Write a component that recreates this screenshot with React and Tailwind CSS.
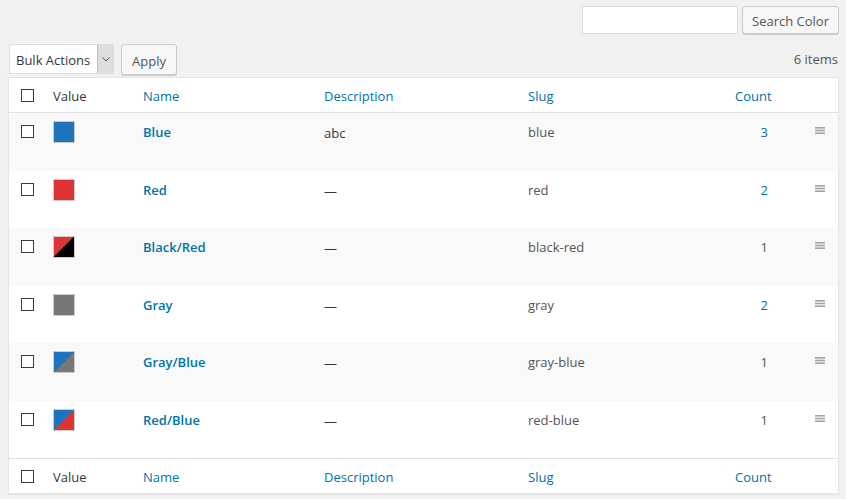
import React from "react";

const rows = [
  { name: "Blue", desc: "abc", slug: "blue", count: "3", link: true, sw: "bg-[#1e73be]" },
  { name: "Red", desc: "—", slug: "red", count: "2", link: true, sw: "bg-[#dd3333]" },
  { name: "Black/Red", desc: "—", slug: "black-red", count: "1", link: false, sw: "bg-[linear-gradient(to_bottom_right,#dd3333_50%,#000000_50%)]" },
  { name: "Gray", desc: "—", slug: "gray", count: "2", link: true, sw: "bg-[#777777]" },
  { name: "Gray/Blue", desc: "—", slug: "gray-blue", count: "1", link: false, sw: "bg-[linear-gradient(to_bottom_right,#1e73be_50%,#777777_50%)]" },
  { name: "Red/Blue", desc: "—", slug: "red-blue", count: "1", link: false, sw: "bg-[linear-gradient(to_bottom_right,#1e73be_50%,#dd3333_50%)]" },
];

const grid = "grid grid-cols-[34px_90px_181px_204px_207px_51px_62px]";

function Checkbox({ className = "" }) {
  return <div className={"w-[13px] h-[13px] border border-[#3c3c3c] bg-white " + className} />;
}

function Handle() {
  return (
    <svg width="10" height="7" viewBox="0 0 10 7" className="block">
      <rect x="0" y="0" width="10" height="1.6" fill="#a0a5aa" />
      <rect x="0" y="2.7" width="10" height="1.6" fill="#a0a5aa" />
      <rect x="0" y="5.4" width="10" height="1.6" fill="#a0a5aa" />
    </svg>
  );
}

function HeadRow({ border }) {
  return (
    <div className={grid + " h-[35px] items-center " + border}>
      <div className="pl-[12px] pt-[1px]"><Checkbox /></div>
      <div className="pl-[10px] pt-[4px] text-[#32373c]">Value</div>
      <div className="pl-[10px] pt-[4px] text-[#0073aa]">Name</div>
      <div className="pl-[10px] pt-[4px] text-[#0073aa]">Description</div>
      <div className="pl-[10px] pt-[4px] text-[#0073aa]">Slug</div>
      <div className="pl-[10px] pt-[4px] text-[#0073aa]">Count</div>
      <div />
    </div>
  );
}

export default function App() {
  return (
    <div className="w-[846px] h-[499px] bg-[#f1f1f1] overflow-hidden font-['Open_Sans',sans-serif] text-[13px] leading-[1.5] text-[#32373c]">
      <div className="flex justify-end pt-[6px] pr-[7px] gap-[4px]">
        <div className="w-[156px] h-[28px] bg-white border border-[#dddddd]" />
        <div className="h-[28px] px-[9px] pt-[3px] flex items-center bg-[#f7f7f7] border border-[#cccccc] rounded-[3px] shadow-[0_1px_0_#cccccc] text-[#555555]">
          Search Color
        </div>
      </div>
      <div className="flex items-center h-[30px] mt-[10px] pl-[9px] pr-[8px]">
        <div className="flex h-[30px] w-[105px] bg-white border border-[#dddddd]">
          <div className="flex-1 flex items-center pl-[6px] pt-[3px] text-[#32373c]">Bulk Actions</div>
          <div className="w-[16px] bg-[#dddddd] border-l border-[#bbbbbb] flex items-center justify-center">
            <svg width="8" height="5" viewBox="0 0 8 5"><path d="M0.5 0.5 L4 4 L7.5 0.5" fill="none" stroke="#555" strokeWidth="1" /></svg>
          </div>
        </div>
        <div className="ml-[7px] h-[31px] mt-[1px] px-[10px] flex items-center pt-[4px] bg-[#f7f7f7] border border-[#cccccc] rounded-[3px] shadow-[0_1px_0_#cccccc] text-[#555555]">
          Apply
        </div>
        <div className="flex-1" />
        <div className="text-[#555555] pt-[1px]">6 items</div>
      </div>
      <div className="mt-[3px] ml-[8px] w-[831px] bg-white border border-[#e5e5e5] shadow-[0_1px_1px_rgba(0,0,0,0.04)]">
        <HeadRow border="border-b border-[#e1e1e1]" />
        {rows.map((r, i) => (
          <div key={r.slug} className={grid + " h-[57.5px] items-start " + (i % 2 === 0 ? "bg-[#f9f9f9]" : "bg-white")}>
            <div className="pl-[12px] pt-[12px]"><Checkbox /></div>
            <div className="pl-[10px] pt-[8px]">
              <div className={"w-[22px] h-[22px] border border-[#cccccc] " + r.sw} />
            </div>
            <div className="pl-[10px] pt-[10px] font-semibold text-[#0073aa]">{r.name}</div>
            <div className="pl-[10px] pt-[11px] text-[#32373c]">{r.desc}</div>
            <div className="pl-[10px] pt-[10px] text-[#555555]">{r.slug}</div>
            <div className={"pr-[8px] pt-[10px] text-right " + (r.link ? "text-[#0073aa]" : "text-[#555555]")}>{r.count}</div>
            <div className="pl-[39px] pt-[14px]"><Handle /></div>
          </div>
        ))}
        <HeadRow border="border-t border-[#e1e1e1]" />
      </div>
    </div>
  );
}
